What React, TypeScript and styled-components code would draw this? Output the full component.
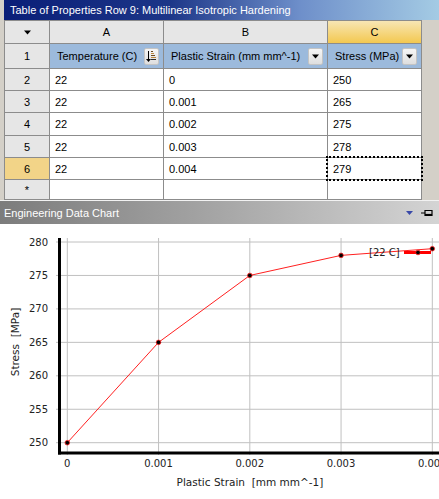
import React from 'react';
import styled, { createGlobalStyle } from 'styled-components';

const GlobalStyle = createGlobalStyle`
  html, body { margin: 0; padding: 0; }
  body {
    background: #d4d0c8;
    font-family: 'Liberation Sans', Arial, sans-serif;
  }
`;

const Page = styled.div`
  width: 439px;
  height: 499px;
  display: flex;
  flex-direction: column;
  overflow: hidden;
  background: #d4d0c8;
`;

const TablePanel = styled.div`
  height: 204px;
  box-sizing: border-box;
  padding-left: 4px;
  border-bottom: 1px solid #f2f2f2;
`;

const TitleBar = styled.div`
  height: 20px;
  line-height: 20px;
  padding-left: 6px;
  color: #fff;
  font-size: 11px;
  white-space: nowrap;
  background: linear-gradient(90deg, #0a1e78 0%, #1c3688 38%, #6e8fca 68%, #a4cbe4 100%);
`;

const Grid = styled.div`
  display: grid;
  grid-template-columns: 44px 113px 163px 93px;
  grid-template-rows: 22px 24px 21px 21px 22px 21px 21px 19px;
  gap: 1px;
  width: fit-content;
  background: #8c8c8c;
  border: 1px solid #8c8c8c;
  font-size: 11px;
  color: #000;
`;

const HeaderCell = styled.div<{ $active?: boolean }>`
  display: flex;
  align-items: center;
  justify-content: center;
  background: ${(p) => (p.$active ? 'linear-gradient(180deg, #f8e6b4 0%, #f3c850 100%)' : '#e6e6e6')};
`;

const RowNum = styled.div<{ $active?: boolean }>`
  display: flex;
  align-items: center;
  justify-content: center;
  background: ${(p) => (p.$active ? '#f2d488' : '#e6e6e6')};
`;

const FieldCell = styled.div`
  display: flex;
  align-items: center;
  justify-content: space-between;
  padding: 0 4px 0 7px;
  background: #9cbadc;
  white-space: nowrap;
`;

const DataCell = styled.div<{ $selected?: boolean }>`
  display: flex;
  align-items: center;
  padding-left: 5px;
  background: #fff;
  ${(p) => (p.$selected ? 'outline: 2px dotted #000; outline-offset: 0px; position: relative;' : '')}
`;

const MiniButton = styled.div`
  width: 15px;
  height: 17px;
  box-sizing: border-box;
  border: 1px solid #c4c4c4;
  border-radius: 2px;
  background: linear-gradient(180deg, #f6f6f6 0%, #dedede 100%);
  display: flex;
  align-items: center;
  justify-content: center;
`;

const ChartHeader = styled.div`
  height: 23px;
  display: flex;
  align-items: center;
  justify-content: space-between;
  padding: 0 6px 0 4px;
  color: #fff;
  font-size: 11px;
  background: linear-gradient(90deg, #7c7c7c 0%, #a6a6a6 50%, #d4d4d4 100%);
`;

const HeaderIcons = styled.div`
  display: flex;
  align-items: center;
  gap: 8px;
`;

const ChartArea = styled.div`
  flex: 1;
  background: #fff;
`;

const AxisText = styled.text`
  font-family: 'DejaVu Sans', sans-serif;
  font-size: 10px;
  fill: #222;
  white-space: pre;
`;

const TitleText = styled(AxisText)`
  font-size: 10.5px;
`;

const DropArrow = () => (
  <svg width="9" height="5" viewBox="0 0 9 5">
    <path d="M1 0.5 H8 L4.5 4.5 Z" fill="#000" />
  </svg>
);

const SortIcon = () => (
  <svg width="11" height="13" viewBox="0 0 11 13">
    <rect x="5" y="1" width="2" height="1" fill="#6a4a20" />
    <rect x="5" y="3" width="3" height="1" fill="#c08a40" />
    <rect x="5" y="5" width="4" height="1" fill="#6a4a20" />
    <rect x="5" y="7" width="5" height="1" fill="#c08a40" />
    <rect x="5" y="9" width="5" height="1" fill="#2a2a2a" />
    <rect x="2" y="1" width="1" height="8" fill="#000" />
    <path d="M0 9 H5 L2.5 12 Z" fill="#000" />
  </svg>
);

const rows = [
  { n: '2', a: '22', b: '0', c: '250' },
  { n: '3', a: '22', b: '0.001', c: '265' },
  { n: '4', a: '22', b: '0.002', c: '275' },
  { n: '5', a: '22', b: '0.003', c: '278' },
  { n: '6', a: '22', b: '0.004', c: '279' },
];

const PropertyTable = () => (
  <TablePanel>
    <TitleBar>Table of Properties Row 9: Multilinear Isotropic Hardening</TitleBar>
    <Grid>
      <HeaderCell>
        <DropArrow />
      </HeaderCell>
      <HeaderCell>A</HeaderCell>
      <HeaderCell>B</HeaderCell>
      <HeaderCell $active>C</HeaderCell>

      <RowNum>1</RowNum>
      <FieldCell>
        Temperature (C)
        <MiniButton>
          <SortIcon />
        </MiniButton>
      </FieldCell>
      <FieldCell>
        Plastic Strain (mm mm^-1)
        <MiniButton>
          <DropArrow />
        </MiniButton>
      </FieldCell>
      <FieldCell>
        Stress (MPa)
        <MiniButton>
          <DropArrow />
        </MiniButton>
      </FieldCell>

      {rows.map((r, i) => (
        <React.Fragment key={r.n}>
          <RowNum $active={i === rows.length - 1}>{r.n}</RowNum>
          <DataCell>{r.a}</DataCell>
          <DataCell>{r.b}</DataCell>
          <DataCell $selected={i === rows.length - 1}>{r.c}</DataCell>
        </React.Fragment>
      ))}

      <RowNum>*</RowNum>
      <DataCell />
      <DataCell />
      <DataCell />
    </Grid>
  </TablePanel>
);

const xs = (s: number) => 67.3 + s * 91250;
const ys = (v: number) => 218.7 - (v - 250) * 6.69;

const points = [
  [0, 250],
  [0.001, 265],
  [0.002, 275],
  [0.003, 278],
  [0.004, 279],
];

const yTicks = [250, 255, 260, 265, 270, 275, 280];
const xTicks = [0, 0.001, 0.002, 0.003, 0.004];

const Chart = () => {
  const line = points.map(([s, v]) => `${xs(s)},${ys(v)}`).join(' ');
  return (
    <ChartArea>
      <svg width="439" height="271" viewBox="0 0 439 271">
        {yTicks.map((v) => (
          <g key={v}>
            <line x1={56} x2={439} y1={ys(v)} y2={ys(v)} stroke="#c0c0c0" strokeWidth={1} />
            <AxisText x={48} y={ys(v) + 3.5} textAnchor="end">
              {v}
            </AxisText>
          </g>
        ))}
        {xTicks.map((s) => (
          <g key={s}>
            <line x1={xs(s)} x2={xs(s)} y1={14} y2={231} stroke="#c0c0c0" strokeWidth={1} />
            <AxisText x={xs(s)} y={243} textAnchor="middle">
              {s === 0 ? '0' : s.toFixed(3)}
            </AxisText>
          </g>
        ))}
        <line x1={59.5} x2={59.5} y1={14} y2={230.5} stroke="#000" strokeWidth={3} />
        <line x1={58} x2={439} y1={229} y2={229} stroke="#000" strokeWidth={3} />

        <polyline points={line} fill="none" stroke="#ff2020" strokeWidth={1} />
        {points.map(([s, v]) => (
          <circle key={s} cx={xs(s)} cy={ys(v)} r={2.3} fill="#000" stroke="#ff2020" strokeWidth={0.8} />
        ))}

        <AxisText x={369} y={31.5}>[22 C]</AxisText>
        <line x1={404} x2={431} y1={28.5} y2={28.5} stroke="#ff0000" strokeWidth={3} />
        <circle cx={418} cy={28.5} r={2.3} fill="#000" stroke="#ff2020" strokeWidth={0.8} />

        <TitleText x={250} y={262} textAnchor="middle">
          {'Plastic Strain  [mm mm^-1]'}
        </TitleText>
        <TitleText x={0} y={0} textAnchor="middle" transform="translate(19 118) rotate(-90)">
          {'Stress  [MPa]'}
        </TitleText>
      </svg>
    </ChartArea>
  );
};

const App = () => (
  <Page>
    <GlobalStyle />
    <PropertyTable />
    <ChartHeader>
      Engineering Data Chart
      <HeaderIcons>
        <svg width="7" height="4" viewBox="0 0 7 4">
          <path d="M0 0 H7 L3.5 4 Z" fill="#3848a8" />
        </svg>
        <svg width="12" height="8" viewBox="0 0 12 8">
          <path d="M0 4 H4 M4 1 V7 M4 1.5 H11 V6.5 H4" fill="none" stroke="#000" strokeWidth={1.2} />
          <line x1="4" x2="11" y1="5.5" y2="5.5" stroke="#000" strokeWidth={1.2} />
        </svg>
      </HeaderIcons>
    </ChartHeader>
    <Chart />
  </Page>
);

export default App;
